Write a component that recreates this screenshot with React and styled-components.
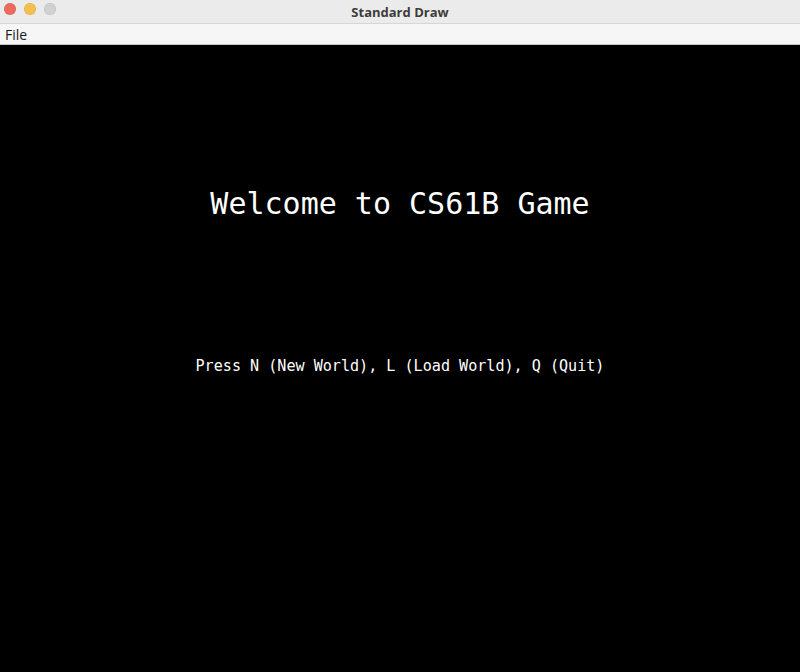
import React from 'react'
import styled, { createGlobalStyle } from 'styled-components'

const GlobalStyle = createGlobalStyle`
    html, body {
        margin: 0;
        padding: 0;
        background: #000;
    }
`

const Window = styled.div`
    width: 800px;
    height: 672px;
    display: flex;
    flex-direction: column;
    overflow: hidden;
`

const TitleBar = styled.div`
    height: 23px;
    background: #ebebeb;
    border-bottom: 1px solid #d6d6d6;
    display: flex;
    align-items: center;
    position: relative;
    justify-content: center;
    font-family: "Open Sans", "Liberation Sans", sans-serif;
    font-weight: 700;
    font-size: 13px;
    color: #3c3c3c;
`

const Lights = styled.div`
    position: absolute;
    left: 4px;
    top: 3px;
    display: flex;
    gap: 8px;
`

const Light = styled.span`
    width: 12px;
    height: 12px;
    border-radius: 50%;
    background: ${p => p.color};
    box-shadow: inset 0 0 0 0.5px rgba(0,0,0,0.12);
`

const MenuBar = styled.div`
    height: 20px;
    background: #f6f6f6;
    border-bottom: 1px solid #c8c8c8;
    display: flex;
    align-items: center;
    padding-left: 5px;
    font-family: "Open Sans", "Liberation Sans", sans-serif;
    font-size: 14px;
    color: #1a1a1a;
`

const Canvas = styled.div`
    flex: 1;
    background: #000;
    display: flex;
    flex-direction: column;
    align-items: center;
    color: #fff;
    font-family: "DejaVu Sans Mono", "Liberation Mono", monospace;
`

const Title = styled.h1`
    margin: 139px 0 0;
    font-size: 30px;
    font-weight: 400;
    line-height: 40px;
`

const Prompt = styled.p`
    margin: 132px 0 0;
    font-size: 15.1px;
    line-height: 20px;
`

export default () => (
    <Window>
        <GlobalStyle />
        <TitleBar>
            <Lights>
                <Light color="#ed6a5e" />
                <Light color="#f5bf4f" />
                <Light color="#d1d1d1" />
            </Lights>
            Standard Draw
        </TitleBar>
        <MenuBar>File</MenuBar>
        <Canvas>
            <Title>Welcome to CS61B Game</Title>
            <Prompt>Press N (New World), L (Load World), Q (Quit)</Prompt>
        </Canvas>
    </Window>
)
